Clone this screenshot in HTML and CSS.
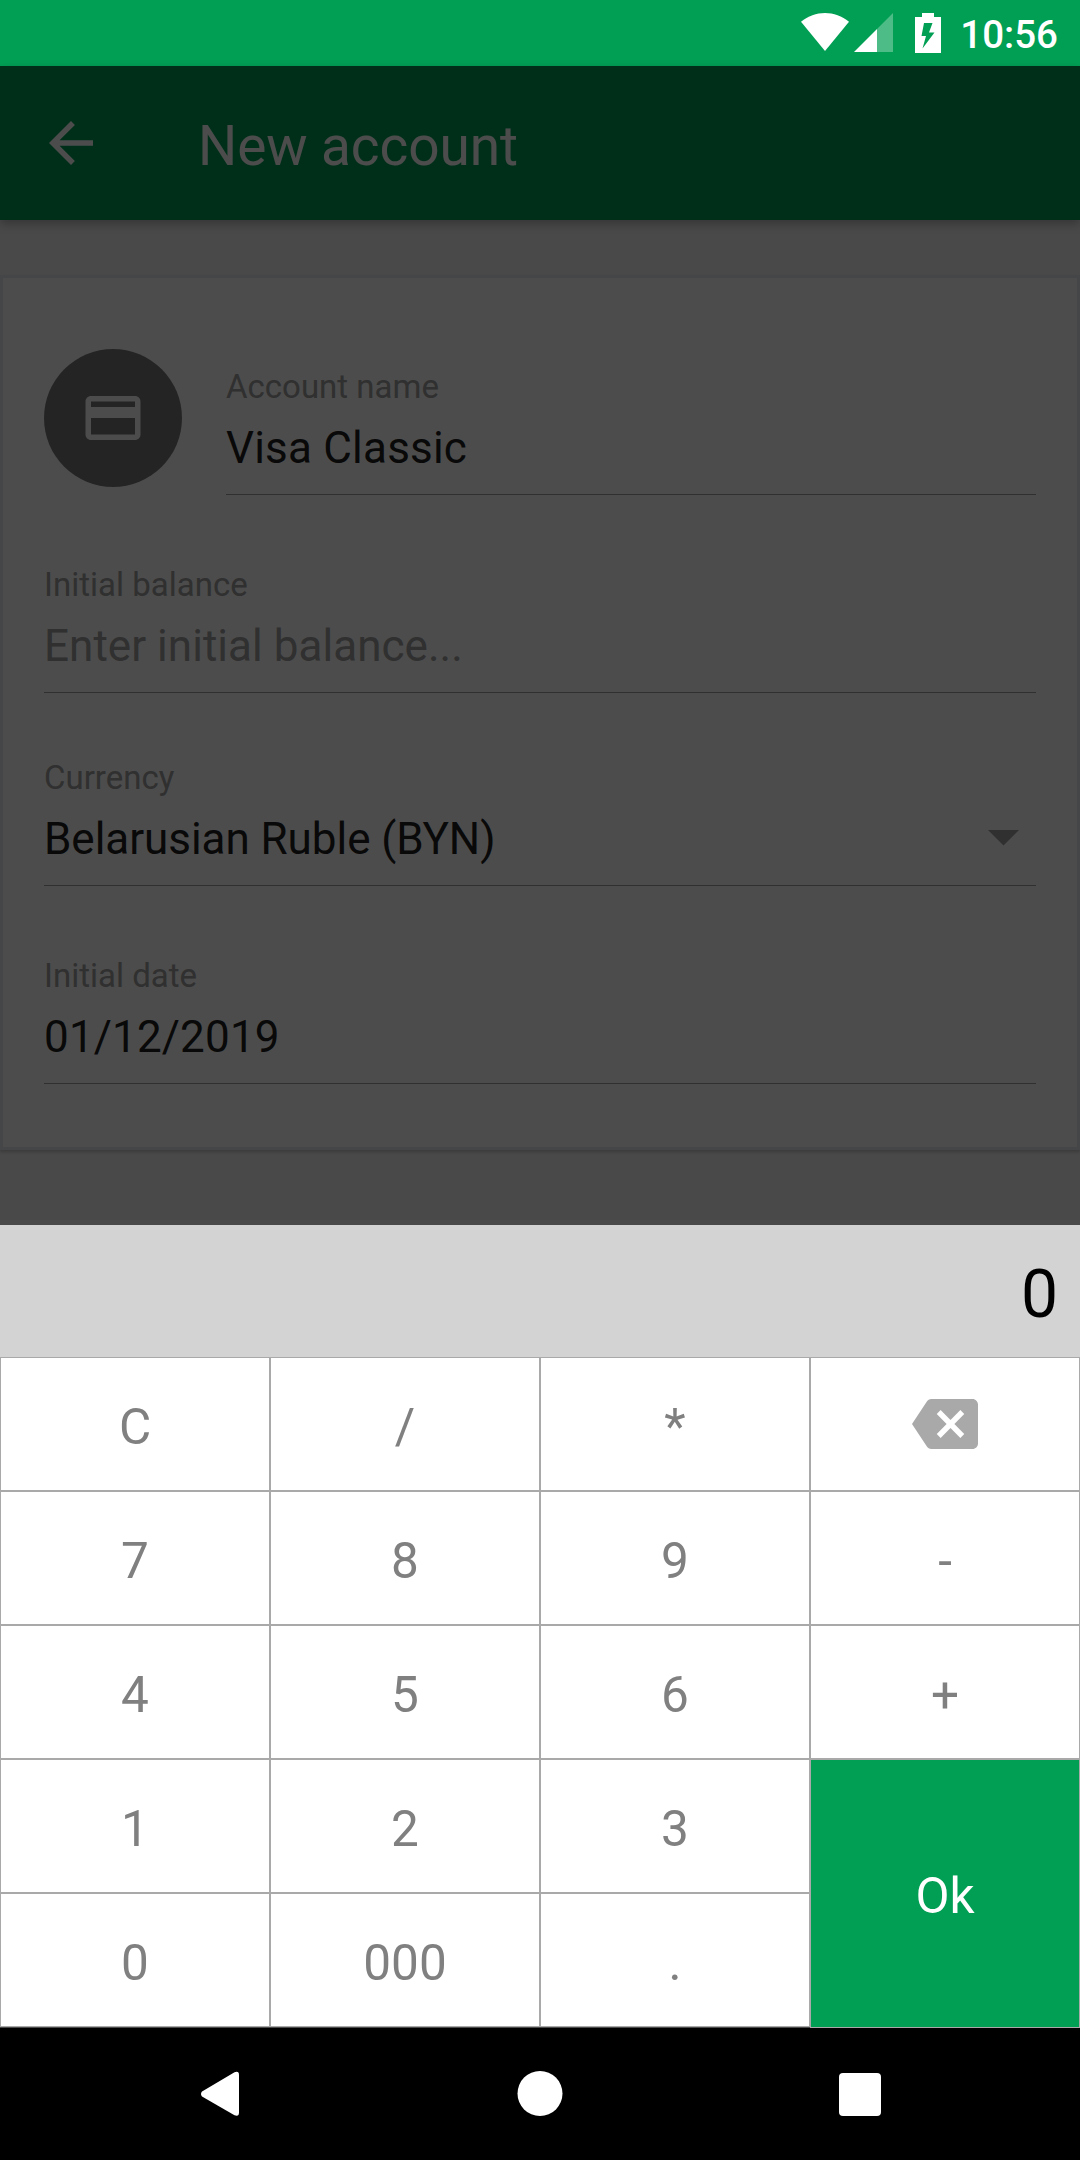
FILE: index.html
```html
<!DOCTYPE html>
<html lang="en">
<head>
<meta charset="utf-8">
<title>New account</title>
<link rel="stylesheet" href="styles.css">
</head>
<body>
<div class="screen">
  <div class="status-bar">
    <svg class="wifi" width="48" height="38" viewBox="0 0 48 38"><path d="M0 8.7C14-2.9 34-2.9 48 8.7L24 38z"/></svg>
    <svg class="signal" width="39" height="39" viewBox="0 0 39 39"><path class="faint" d="M23 16L39 0v39H23z"/><path d="M0 39L23 16v23z"/></svg>
    <svg class="battery" width="26" height="40" viewBox="0 0 26 40"><path fill-rule="evenodd" d="M7 0h12v4h7v36H0V4h7zM9 10L6.500 23H11L7.500 35.500L19.500 19.500H14L17.500 10z"/></svg>
    <span class="clock">10:56</span>
  </div>
  <div class="content">
    <header class="toolbar">
      <svg width="66" height="66" viewBox="0 0 24 24"><path d="M20 11H7.830l5.590-5.590L12 4l-8 8 8 8 1.410-1.410L7.830 13H20z"/></svg>
      <h1>New account</h1>
    </header>
    <main class="card">
      <div class="account-row">
        <div class="avatar"><svg width="66" height="66" viewBox="0 0 24 24"><path d="M20 4H4c-1.110 0-1.990.890-1.990 2L2 18c0 1.110.890 2 2 2h16c1.110 0 2-.890 2-2V6c0-1.110-.890-2-2-2zm0 14H4v-6h16zm0-10H4V6h16z"/></svg></div>
        <div class="field name"><div class="label">Account name</div><div class="value">Visa Classic</div></div>
      </div>
      <div class="field balance"><div class="label">Initial balance</div><div class="value hint">Enter initial balance...</div></div>
      <div class="field currency"><div class="label">Currency</div><div class="value">Belarusian Ruble (BYN)<svg width="31" height="16" viewBox="0 0 31 16"><path d="M0 0h31L15.500 15.500z"/></svg></div></div>
      <div class="field date"><div class="label">Initial date</div><div class="value">01/12/2019</div></div>
    </main>
    <div class="scrim"></div>
  </div>
  <div class="display">0</div>
  <div class="keypad">
    <div class="key">C</div><div class="key">/</div><div class="key">*</div>
    <div class="key"><svg width="66" height="50" viewBox="0 3 24 18" preserveAspectRatio="none"><path d="M22 3H7c-.690 0-1.230.350-1.590.880L0 12l5.410 8.110c.360.530.900.890 1.590.890h15c1.100 0 2-.900 2-2V5c0-1.100-.900-2-2-2zm-3 12.590L17.590 17 14 13.410 10.410 17 9 15.590 12.590 12 9 8.410 10.410 7 14 10.590 17.590 7 19 8.410 15.410 12z"/></svg></div>
    <div class="key">7</div><div class="key">8</div><div class="key">9</div><div class="key">-</div>
    <div class="key">4</div><div class="key">5</div><div class="key">6</div><div class="key">+</div>
    <div class="key">1</div><div class="key">2</div><div class="key">3</div><div class="key ok">Ok</div>
    <div class="key">0</div><div class="key">000</div><div class="key">.</div>
  </div>
  <nav class="nav-bar">
    <svg width="40" height="46" viewBox="0 0 40 46"><path d="M2 20.500L34.500 1.200Q39 -.500 39 4v37.500Q39 46 34.500 44.300L2 25.500Q0 23 2 20.500z"/></svg>
    <svg width="46" height="46" viewBox="0 0 46 46"><circle cx="23" cy="22.500" r="22.500"/></svg>
    <svg width="42" height="43" viewBox="0 0 42 43"><rect width="42" height="43" rx="4"/></svg>
  </nav>
</div>
</body>
</html>
```
FILE: styles.css
```css
* { box-sizing: border-box; }
body { margin: 0; font-family: Roboto, sans-serif; }
svg { display: block; flex: none; }
.screen { width: 1080px; height: 2160px; display: flex; flex-direction: column; overflow: hidden; background: #000; }
.status-bar { height: 66px; background: #009f54; color: #fff; display: flex; align-items: flex-start; padding: 13px 22px 0 801px; }
.status-bar svg { fill: #fff; }
.signal { margin-left: 5px; }
.signal .faint { opacity: .3; }
.battery { margin-left: 22px; }
.clock { margin-left: auto; font-size: 38.5px; font-weight: 500; line-height: 44px; }
.content { position: relative; height: 1159px; background: #f3f3f3; }
.scrim { position: absolute; inset: 0; background: rgba(0, 0, 0, .7); }
.toolbar { height: 154px; background: #009f54; display: flex; align-items: center; padding-left: 38px; gap: 94px; box-shadow: 0 4px 9px rgba(0, 0, 0, .26); }
.toolbar svg { fill: #fff; }
.toolbar h1 { margin: 0; padding-top: 6px; color: #fff; font-size: 55px; font-weight: 400; line-height: 66px; letter-spacing: -.1px; }
.card { margin-top: 55px; height: 875px; border: 3px solid #e4e9ed; background: #fff; padding: 71px 41px 63px; box-shadow: 0 2px 3px rgba(0, 0, 0, .2); }
.account-row { display: flex; gap: 44px; }
.account-row .field { flex: 1; margin-top: 18px; }
.avatar { width: 138px; height: 138px; border-radius: 50%; background: #7b7b7b; display: flex; align-items: center; justify-content: center; }
.avatar svg { fill: #fff; }
.field { height: 128px; border-bottom: 1px solid #a0a0a0; }
.balance { margin-top: 70px; }
.currency { margin-top: 65px; }
.date { margin-top: 70px; }
.label { font-size: 33px; line-height: 40px; color: #a0a0a0; }
.value { margin-top: 15px; font-size: 44px; line-height: 52px; color: #212121; display: flex; align-items: center; justify-content: space-between; }
.name .value { letter-spacing: .2px; }
.date .value { letter-spacing: .15px; }
.currency .value { letter-spacing: -.05px; }
.value.hint { color: #a0a0a0; letter-spacing: .04px; }
.value svg { fill: #a0a0a0; margin: 0 17px 3px 0; }
.display { height: 132px; background: #d3d3d3; color: #000; font-size: 66px; line-height: 140px; text-align: right; padding-right: 22px; }
.keypad { height: 671px; padding-bottom: 1px; display: grid; grid-template-columns: repeat(4, 270px); grid-template-rows: repeat(5, 134px); background: #4a4a4a; }
.key { border: 1px solid #a9a9a9; background: #fff; color: #808080; font-size: 49.5px; display: flex; align-items: center; justify-content: center; padding-top: 6px; }
.key svg { fill: #a9a9a9; margin-top: -6px; }
.ok { grid-column: 4; grid-row: 4 / 6; height: 269px; padding-top: 4px; background: #009f54; color: #fff; }
.nav-bar { height: 132px; background: #000; display: flex; align-items: center; padding: 0 199px 0 200px; justify-content: space-between; }
.nav-bar svg { fill: #fff; }
```
